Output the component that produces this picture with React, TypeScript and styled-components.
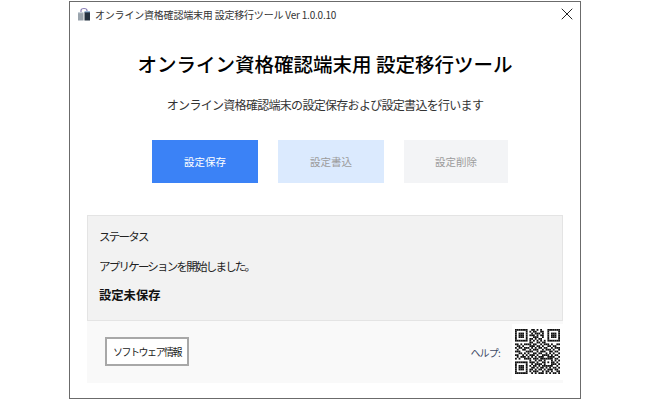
import React from "react";
import styled, { createGlobalStyle } from "styled-components";
import { X } from "lucide-react";

const GlobalStyle = createGlobalStyle`
  html, body {
    margin: 0;
    padding: 0;
    background: #ffffff;
    font-family: "Noto Sans CJK JP", "Noto Sans", sans-serif;
  }
`;

const Page = styled.div`
  width: 650px;
  height: 400px;
  box-sizing: border-box;
  padding: 1px 69px 1px 69px;
  overflow: hidden;
`;

const Window = styled.div`
  width: 512px;
  height: 398px;
  box-sizing: border-box;
  border: 1px solid #6b6b6b;
  display: flex;
  flex-direction: column;
  background: #fff;
`;

const TitleBar = styled.div`
  height: 24px;
  display: flex;
  align-items: center;
  padding: 0 3px 0 7px;
  gap: 4px;
  font-size: 10px;
  letter-spacing: -0.2px;
  color: #333;
`;

const TitleText = styled.span`
  flex: 1;
  white-space: nowrap;
`;

const Heading = styled.h1`
  margin: 21px 0 0;
  height: 34px;
  line-height: 34px;
  text-align: center;
  font-size: 19.5px;
  font-weight: 500;
  color: #000;
`;

const Lead = styled.p`
  margin: 14px 0 0;
  height: 20px;
  line-height: 20px;
  text-align: center;
  font-size: 12px;
  letter-spacing: -0.7px;
  color: #333;
`;

const ButtonRow = styled.div`
  margin-top: 25px;
  display: flex;
  padding-left: 82px;
  gap: 20px;
`;

const ActionButton = styled.button<{ $tone: "primary" | "blue" | "gray" }>`
  width: ${(p) => (p.$tone === "gray" ? "104px" : "106px")};
  height: 43px;
  border: 0;
  padding: 0;
  font-family: inherit;
  font-size: 10.5px;
  background: ${(p) =>
    p.$tone === "primary" ? "#3b82f6" : p.$tone === "blue" ? "#dbeafe" : "#f3f4f6"};
  color: ${(p) => (p.$tone === "primary" ? "#fff" : "#9b9b9b")};
`;

const StatusPanel = styled.section`
  margin: 32px 17px 0;
  height: 106px;
  box-sizing: border-box;
  background: #f2f2f2;
  border: 1px solid #e4e4e4;
  padding: 10px 11px;
  display: flex;
  flex-direction: column;
  gap: 9.5px;
  color: #222;
`;

const StatusLine = styled.div<{ $bold?: boolean }>`
  height: 20px;
  line-height: 20px;
  font-size: ${(p) => (p.$bold ? "12.3px" : "11.5px")};
  letter-spacing: ${(p) => (p.$bold ? "0" : "-1.78px")};
  font-weight: ${(p) => (p.$bold ? 700 : 400)};
  color: ${(p) => (p.$bold ? "#111" : "#222")};
`;

const Footer = styled.footer`
  margin: 0 17px;
  height: 62px;
  background: #f9f9f9;
  display: flex;
  align-items: center;
  padding: 0 0 0 18px;
`;

const InfoButton = styled.button`
  width: 84px;
  height: 29px;
  box-sizing: border-box;
  margin-top: -2px;
  background: #fff;
  border: 2px solid #a8a8a8;
  font-family: inherit;
  font-size: 10px;
  letter-spacing: -1.5px;
  color: #222;
  padding: 0;
`;

const HelpLabel = styled.span`
  margin-left: auto;
  margin-right: 12px;
  font-size: 10px;
  letter-spacing: -0.8px;
  color: #3d4a66;
`;

const QrBox = styled.div`
  width: 51px;
  height: 56px;
  box-sizing: border-box;
  background: #fff;
  padding: 5px 0 0 3px;
`;

const QR_ROWS = [
  "1111111001101010001111111",
  "1000001010110011001000001",
  "1011101001011101001011101",
  "1011101011101011001011101",
  "1011101000111001001011101",
  "1000001011010110001000001",
  "1111111010101010101111111",
  "0000000011001101100000000",
  "1101011110110010111010011",
  "0110100011101101001101100",
  "1011011101010110110010111",
  "0100110010111001011101001",
  "1110001111001011100110110",
  "0011010100110110010101001",
  "1100101011101001111010110",
  "0101110101010111001111001",
  "1010011110111011111110110",
  "0000000010010110100010101",
  "1111111011101001101011010",
  "1000001001011110100011101",
  "1011101010110101111110010",
  "1011101001101011010101101",
  "1011101011010110101110110",
  "1000001010111001011010011",
  "1111111001010111010101101",
];

const QrCode = () => (
  <svg width="45" height="45" viewBox="0 0 25 25" style={{ display: "block" }}>
    {QR_ROWS.flatMap((row, y) =>
      row.split("").map((c, x) =>
        c === "1" ? <rect key={`${x}-${y}`} x={x} y={y} width="1" height="1" fill="#111" /> : null
      )
    )}
  </svg>
);

const AppIcon = () => (
  <svg width="14" height="14" viewBox="0 0 14 14">
    <path d="M4 6V3.5C4 2 5.5 1.5 7 1.5S10 2 10 3.5V4" fill="none" stroke="#8a7fb5" strokeWidth="1.2" />
    <rect x="1" y="6" width="5.5" height="7.5" fill="#9aa4ad" />
    <rect x="7.5" y="5" width="5.5" height="8.5" fill="#23303f" />
    <rect x="1" y="5" width="5.5" height="1.2" fill="#c9d2da" />
    <rect x="7.5" y="4.2" width="5.5" height="1.2" fill="#7fa3c7" />
  </svg>
);

export default function App() {
  return (
    <>
      <GlobalStyle />
      <Page>
        <Window>
          <TitleBar>
            <AppIcon />
            <TitleText>オンライン資格確認端末用 設定移行ツール Ver 1.0.0.10</TitleText>
            <X size={20} strokeWidth={1.2} color="#222" />
          </TitleBar>
          <Heading>オンライン資格確認端末用 設定移行ツール</Heading>
          <Lead>オンライン資格確認端末の設定保存および設定書込を行います</Lead>
          <ButtonRow>
            <ActionButton $tone="primary">設定保存</ActionButton>
            <ActionButton $tone="blue">設定書込</ActionButton>
            <ActionButton $tone="gray">設定削除</ActionButton>
          </ButtonRow>
          <StatusPanel>
            <StatusLine>ステータス</StatusLine>
            <StatusLine>アプリケーションを開始しました。</StatusLine>
            <StatusLine $bold>設定未保存</StatusLine>
          </StatusPanel>
          <Footer>
            <InfoButton>ソフトウェア情報</InfoButton>
            <HelpLabel>ヘルプ:</HelpLabel>
            <QrBox>
              <QrCode />
            </QrBox>
          </Footer>
        </Window>
      </Page>
    </>
  );
}
